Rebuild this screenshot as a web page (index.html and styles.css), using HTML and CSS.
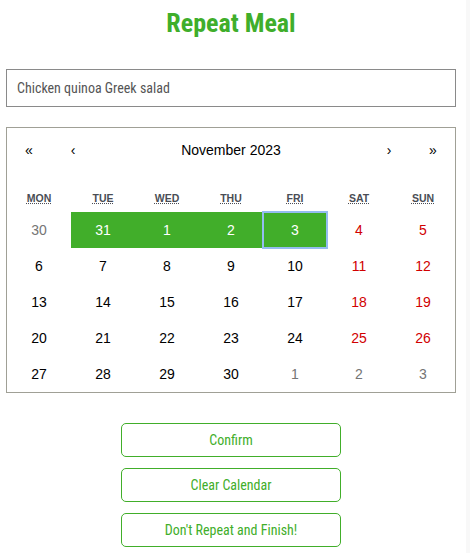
FILE: index.html
```html
<!DOCTYPE html>
<html>
<head>
<meta charset="utf-8">
<link rel="stylesheet" href="styles.css">
</head>
<body>
<div class="page">
  <h1 class="title">Repeat Meal</h1>
  <div class="meal-input">Chicken quinoa Greek salad</div>
  <div class="calendar">
    <div class="cal-nav">
      <button class="nav-btn">«</button>
      <button class="nav-btn">‹</button>
      <button class="nav-label">November 2023</button>
      <button class="nav-btn">›</button>
      <button class="nav-btn">»</button>
    </div>
    <div class="weekdays">
      <div class="wd"><abbr title="Monday">Mon</abbr></div>
      <div class="wd"><abbr title="Tuesday">Tue</abbr></div>
      <div class="wd"><abbr title="Wednesday">Wed</abbr></div>
      <div class="wd"><abbr title="Thursday">Thu</abbr></div>
      <div class="wd"><abbr title="Friday">Fri</abbr></div>
      <div class="wd"><abbr title="Saturday">Sat</abbr></div>
      <div class="wd"><abbr title="Sunday">Sun</abbr></div>
    </div>
    <div class="days">
      <button class="tile other">30</button>
      <button class="tile sel">31</button>
      <button class="tile sel">1</button>
      <button class="tile sel">2</button>
      <button class="tile sel focus">3</button>
      <button class="tile weekend">4</button>
      <button class="tile weekend">5</button>

      <button class="tile">6</button>
      <button class="tile">7</button>
      <button class="tile">8</button>
      <button class="tile">9</button>
      <button class="tile">10</button>
      <button class="tile weekend">11</button>
      <button class="tile weekend">12</button>

      <button class="tile">13</button>
      <button class="tile">14</button>
      <button class="tile">15</button>
      <button class="tile">16</button>
      <button class="tile">17</button>
      <button class="tile weekend">18</button>
      <button class="tile weekend">19</button>

      <button class="tile">20</button>
      <button class="tile">21</button>
      <button class="tile">22</button>
      <button class="tile">23</button>
      <button class="tile">24</button>
      <button class="tile weekend">25</button>
      <button class="tile weekend">26</button>

      <button class="tile">27</button>
      <button class="tile">28</button>
      <button class="tile">29</button>
      <button class="tile">30</button>
      <button class="tile other">1</button>
      <button class="tile other">2</button>
      <button class="tile other">3</button>
    </div>
  </div>
  <div class="actions">
    <button class="action">Confirm</button>
    <button class="action">Clear Calendar</button>
    <button class="action">Don't Repeat and Finish!</button>
  </div>
</div>
</body>
</html>
```
FILE: styles.css
```css
html {
  background: #f8f8f8;
  margin: 0;
  padding: 0;
}
body {
  margin: 0;
  width: 466px;
  min-height: 553px;
  background: #ffffff;
}
.page {
  width: 450px;
  padding: 0 6px;
  display: flex;
  flex-direction: column;
  font-family: "Roboto Condensed", "Liberation Sans Narrow", Roboto, sans-serif;
  font-stretch: condensed;
}
.title {
  margin: 7px 0 0;
  height: 32px;
  line-height: 32px;
  font-size: 26px;
  font-weight: 700;
  color: #3fae2b;
  text-align: center;
}
.meal-input {
  margin-top: 30px;
  height: 36px;
  border: 1px solid #8a8a8a;
  padding: 0 10px;
  display: flex;
  align-items: center;
  font-size: 14px;
  color: #555555;
}
.calendar {
  margin-top: 20px;
  border: 1px solid #a0a096;
  background: #fff;
  font-family: "Liberation Sans", Arial, sans-serif;
  font-stretch: normal;
  font-size: 14px;
  line-height: 1.125em;
}
.calendar button {
  font-family: inherit;
  margin: 0;
  border: 0;
  outline: none;
  background: none;
  color: #000;
  cursor: pointer;
}
.cal-nav {
  display: flex;
  height: 44px;
  margin-bottom: 16px;
}
.nav-btn {
  min-width: 44px;
  font-size: 14px;
  padding: 0;
}
.nav-label {
  flex-grow: 1;
  font-size: 14px;
  padding: 0;
}
.weekdays {
  display: grid;
  grid-template-columns: repeat(7, 1fr);
  height: 24px;
}
.wd {
  display: flex;
  align-items: center;
  justify-content: center;
  padding-bottom: 3px;
  text-transform: uppercase;
  font-weight: 700;
  font-size: 10.5px;
}
.wd abbr {
  text-decoration: underline dotted;
  color: #4a4d55;
}
.days {
  display: grid;
  grid-template-columns: repeat(7, 64px);
}
.tile {
  height: 36px;
  padding: 0;
  font-size: 14px;
  line-height: 16px;
  text-align: center;
}
.calendar .tile.weekend { color: #d10000; }
.calendar .tile.other { color: #757575; }
.calendar .tile.sel {
  background: #41ae2a;
  color: #ffffff;
}
.calendar .tile.focus {
  outline: 2px solid #94bcf0;
  outline-offset: -1px;
}
.actions {
  margin-top: 30px;
  display: flex;
  flex-direction: column;
  align-items: center;
  gap: 11px;
}
.action {
  width: 220px;
  height: 34px;
  margin: 0;
  padding: 0;
  border: 1px solid #41ae2a;
  border-radius: 5px;
  background: #fff;
  color: #41ae2a;
  font-family: "Roboto Condensed", "Liberation Sans Narrow", Roboto, sans-serif;
  font-stretch: condensed;
  font-size: 14px;
  cursor: pointer;
}
```
